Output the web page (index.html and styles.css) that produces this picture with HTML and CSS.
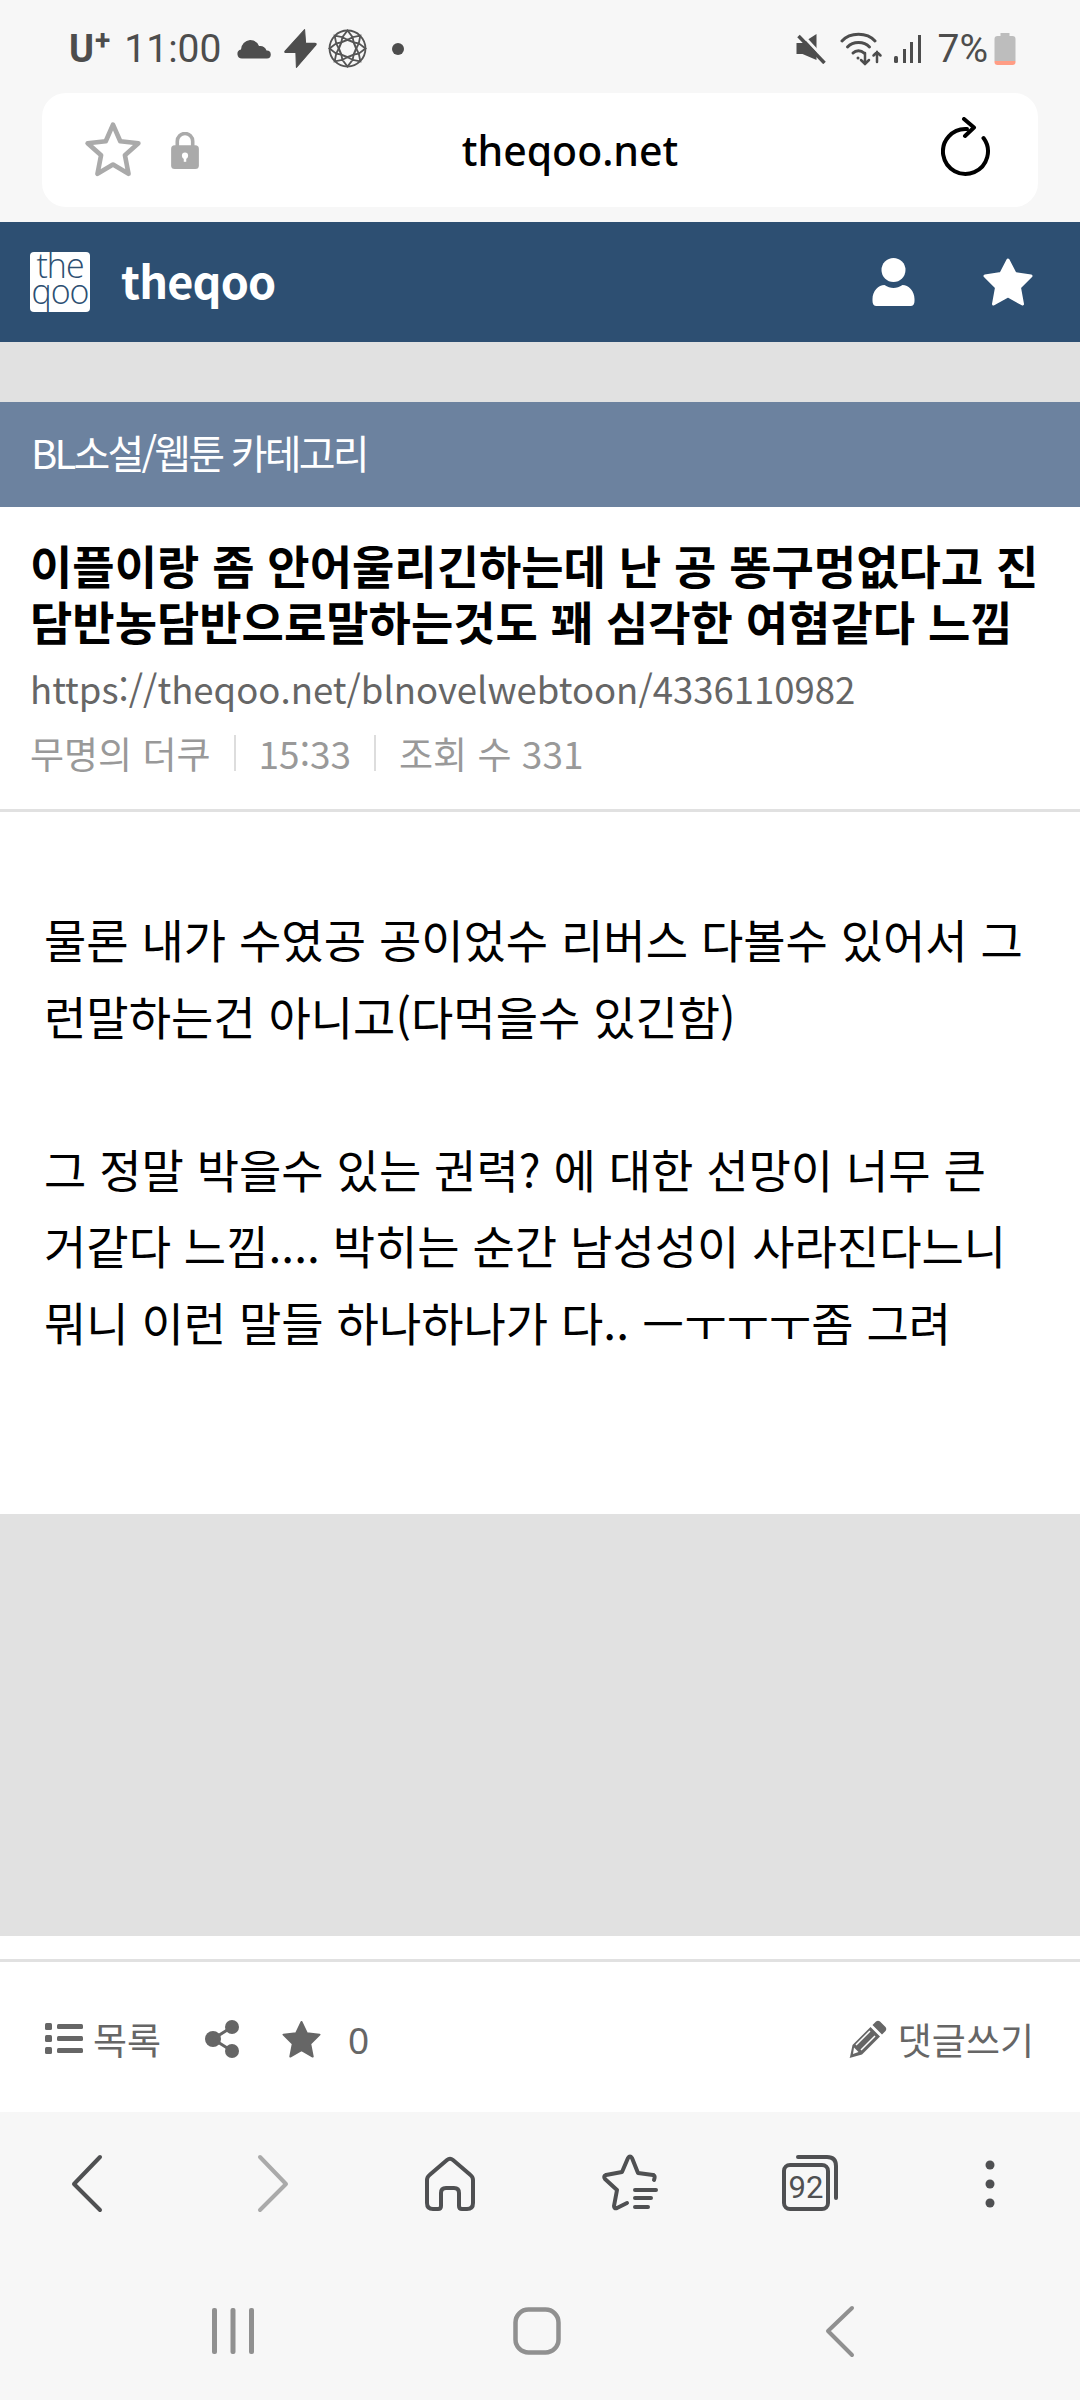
FILE: index.html
```html
<!DOCTYPE html>
<html lang="ko">
<head>
<meta charset="utf-8">
<title>theqoo</title>
<link rel="stylesheet" href="styles.css">
</head>
<body>
<div class="status">
  <div class="status-left">
    <span class="carrier">U<sup>+</sup></span>
    <span class="time">11:00</span>
    <svg class="i-cloud" viewBox="0 0 36 22"><path fill="#4d4d4d" d="M6 20.500a4.500 4.500 0 0 1-1-8.900A10 10 0 0 1 14 2a9.500 9.500 0 0 1 9 6 7 7 0 0 1 7.500 4.500 4 4 0 0 1 .5 8z"/></svg>
    <svg class="i-bolt" viewBox="0 0 32 38"><path fill="#4d4d4d" d="M20 .5 1 21.500q-1 1.500 1 1.500h9.500L12 37.500 31 15.500q1-1.500-1-1.500h-9z" stroke="#4d4d4d" stroke-linejoin="round"/></svg>
    <svg class="i-gem" viewBox="0 0 38 38" fill="none" stroke="#555" stroke-width="1.800"><circle cx="19" cy="19" r="17.500"/><path d="M19 10.500 25 13l2.500 6L25 25l-6 2.500L13 25l-2.500-6L13 13z" stroke-width="2"/><path d="M19 1.500 14 8l5 2.500L24 8zM19 36.500 14 30l5-2.500L24 30zM1.500 19 8 14l2.500 5L8 24zM36.500 19 30 14l-2.500 5L30 24zM6.500 6.500 14 8l-1 5-5 1zM31.500 6.500 24 8l1 5 5 1zM6.500 31.500 14 30l-1-5-5-1zM31.500 31.500 24 30l1-5 5-1z"/></svg>
    <span class="dot"></span>
  </div>
  <div class="status-right">
    <svg class="i-mute" viewBox="0 0 30 30"><path fill="#4d4d4d" d="M0 9h6L20 0v26L6 20H0z"/><path d="M5 0 30 27" stroke="#f7f7f7" stroke-width="3"/><path d="M2 2 28 29" stroke="#4d4d4d" stroke-width="3.500"/></svg>
    <svg class="i-wifi" viewBox="0 0 43 34" fill="none" stroke="#4d4d4d" stroke-width="3" stroke-linecap="round"><path d="M2 9C10 0 27 0 35 9"/><path d="M7.500 15C13 9 24 9 29.500 15"/><path d="M13 21c3-3 8-3 11 0"/><path d="M25 21v11m-4-4 4 4 4-4" stroke-width="2.500"/><path d="M37 30V20m-3.500 3.500L37 20l3.500 3.500" stroke-width="2.500"/><circle cx="18" cy="26" r="1.500" fill="#4d4d4d" stroke="none"/></svg>
    <svg class="i-signal" viewBox="0 0 27 30" fill="#4d4d4d"><rect x="0" y="22" width="4" height="7" rx="1.500"/><rect x="9" y="15" width="3" height="14"/><rect x="16" y="8" width="3" height="21"/><rect x="24" y="1" width="3" height="28"/></svg>
    <span class="pct">7%</span>
    <svg class="i-batt" viewBox="0 0 21 32"><path fill="#bdbdbd" d="M6 0h9v3h3a3 3 0 0 1 3 3v22H0V6a3 3 0 0 1 3-3h3z"/><path fill="#ff9d85" d="M0 28h21v1a3 3 0 0 1-3 3H3a3 3 0 0 1-3-3z"/></svg>
  </div>
</div>

<div class="urlwrap">
  <div class="urlbar">
    <svg class="i-fav" viewBox="0 0 56 56" fill="none" stroke="#aaa" stroke-width="4.500" stroke-linejoin="round"><path d="M28 3.500 35 19.500 52.500 21.500 39.500 33 43 51 28 42 13 51 16.500 33 3.500 21.500 21 19.500z"/></svg>
    <svg class="i-lock" viewBox="0 0 27 36"><path fill="none" stroke="#aaa" stroke-width="3.500" d="M6 16V9a7.500 7.500 0 0 1 15 0v7"/><rect x="0" y="13" width="27" height="23" rx="3.500" fill="#aaa"/><circle cx="13.500" cy="23" r="3" fill="#fff"/><rect x="12.300" y="23" width="2.400" height="6" fill="#fff"/></svg>
    <span class="domain">theqoo.net</span>
    <svg class="i-reload" viewBox="0 0 50 60" fill="none" stroke="#000" stroke-width="4" stroke-linecap="round" stroke-linejoin="round"><path d="M42.500 21A22.500 22.500 0 1 1 26 12"/><path d="M23 2 33 10.500 24 19"/></svg>
  </div>
</div>

<header class="site">
  <div class="logo">the<br>qoo</div>
  <span class="brand">theqoo</span>
  <svg class="i-user" viewBox="0 0 42 48" fill="#fff"><circle cx="21" cy="12" r="12"/><path d="M0 43v-2c0-8 6-14 12-14 3 2 6 3 9 3s6-1 9-3c6 0 12 6 12 14v2q0 5-4 5H4q-4 0-4-5z"/></svg>
  <svg class="i-hstar" viewBox="0 0 50 48" fill="#fff" stroke="#fff" stroke-width="3" stroke-linejoin="round"><path d="M25 2 32 15.500 48 18 36.500 29.500 39.500 46 25 38 10.500 46 13.500 29.500 2 18 18 15.500z"/></svg>
</header>

<div class="gap-top"></div>

<div class="cat">BL소설/웹툰 카테고리</div>

<section class="head">
  <h1 class="title">이플이랑 좀 안어울리긴하는데 난 공 똥구멍없다고 진<br>담반농담반으로말하는것도 꽤 심각한 여혐같다 느낌</h1>
  <div class="link">https://theqoo.net/blnovelwebtoon/4336110982</div>
  <div class="meta"><span>무명의 더쿠</span><i></i><span>15:33</span><i></i><span>조회 수 331</span></div>
</section>

<article class="body">
  <p>물론 내가 수였공 공이었수 리버스 다볼수 있어서 그<br>런말하는건 아니고(다먹을수 있긴함)</p>
  <p class="blank">&nbsp;</p>
  <p>그 정말 박을수 있는 권력? 에 대한 선망이 너무 큰<br>거같다 느낌.... 박히는 순간 남성성이 사라진다느니<br>뭐니 이런 말들 하나하나가 다.. ㅡㅜㅜㅜ좀 그려</p>
</article>

<div class="ad"></div>
<div class="strip"></div>

<div class="actions">
  <svg class="i-list" viewBox="0 0 38 32" fill="#666"><rect x="0" y="0" width="7" height="7" rx="1.500"/><rect x="0" y="12" width="7" height="7" rx="1.500"/><rect x="0" y="24" width="7" height="7" rx="1.500"/><rect x="12" y="1" width="26" height="5" rx="1.500"/><rect x="12" y="13" width="26" height="5" rx="1.500"/><rect x="12" y="25" width="26" height="5" rx="1.500"/></svg>
  <span class="a-label">목록</span>
  <svg class="i-share" viewBox="0 0 34 38" fill="#666"><circle cx="27" cy="7" r="7"/><circle cx="27" cy="31" r="7"/><circle cx="8" cy="19" r="8"/><path d="M8 19 27 7M8 19l19 12" stroke="#666" stroke-width="3"/></svg>
  <svg class="i-astar" viewBox="0 0 40 38" fill="#666" stroke="#666" stroke-width="2" stroke-linejoin="round"><path d="M20 1.500 25.500 13 38.500 14.500 29 24 31.500 37 20 30.500 8.500 37 11 24 1.500 14.500 14.500 13z"/></svg>
  <span class="a-count">0</span>
  <span class="a-fill"></span>
  <svg class="i-pen" viewBox="0 0 38 38"><path fill="#666" d="M27 1.500q2-1.500 4 0l5.500 5.500q1.500 2 0 4L33 14.500 23.500 5zM21.500 7 31 16.500 13 34.500 0.500 38 1 37 3.500 25z"/><path fill="#fff" d="M5 27.500 9.500 32 4 34z"/><path stroke="#fff" stroke-width="1.500" d="M21 11 7 25M26 16 12 30"/></svg>
  <span class="a-label">댓글쓰기</span>
</div>

<nav class="toolbar">
  <svg viewBox="0 0 60 60" fill="none" stroke="#4f5052" stroke-width="4" stroke-linecap="round" stroke-linejoin="round"><path d="M43 3 17 30 43 56"/></svg>
  <svg viewBox="0 0 60 60" fill="none" stroke="#aaa" stroke-width="4" stroke-linecap="round" stroke-linejoin="round"><path d="M17 3 43 30 17 56"/></svg>
  <svg viewBox="0 0 60 60" fill="none" stroke="#4f5052" stroke-width="4" stroke-linecap="round" stroke-linejoin="round"><path d="M7 26q0-3 2.500-5L27 6q3-2.500 6 0l17.500 15q2.500 2 2.500 5v23q0 6-6 6H42q-3 0-3-3V39q0-5-5-5h-8q-5 0-5 5v13q0 3-3 3H13q-6 0-6-6z"/></svg>
  <svg viewBox="0 0 60 60" fill="none" stroke="#4f5052" stroke-width="4" stroke-linecap="round" stroke-linejoin="round"><path d="M54 21 39 19 33 4q-2-3-4 0L23 18 7 21q-3 1-1 4l12 11-3 16q0 3 3 2l10-5"/><path d="M54.500 21q2 1 .5 5M36 36h21M36 44h16M36 53h13"/></svg>
  <svg viewBox="0 0 60 60" fill="none" stroke="#4f5052" stroke-linecap="round"><path stroke-width="4" d="M17 3h29q9 0 9 9v32"/><rect x="3" y="11" width="44" height="44" rx="6" stroke-width="4"/><text class="tabnum" x="25" y="44" text-anchor="middle">92</text></svg>
  <svg viewBox="0 0 60 60" fill="#4f5052"><circle cx="30" cy="11" r="4.500"/><circle cx="30" cy="30" r="4.500"/><circle cx="30" cy="49" r="4.500"/></svg>
</nav>

<nav class="sysnav">
  <svg class="n-rec" viewBox="0 0 60 60" fill="#909090"><rect x="9" y="7" width="5" height="46" rx="2"/><rect x="27.500" y="7" width="5" height="46" rx="2"/><rect x="46" y="7" width="5" height="46" rx="2"/></svg>
  <svg class="n-home" viewBox="0 0 60 60" fill="none" stroke="#909090" stroke-width="4.500"><rect x="2.500" y="6.500" width="43" height="43" rx="13" transform="translate(6 2)"/></svg>
  <svg class="n-back" viewBox="0 0 60 60" fill="none" stroke="#909090" stroke-width="4" stroke-linecap="round" stroke-linejoin="round"><path d="M42 7 18 30 42 54"/></svg>
</nav>
</body>
</html>
```

FILE: styles.css
```css
* { box-sizing: border-box; }
html, body { margin: 0; padding: 0; }
body {
  width: 1080px;
  height: 2400px;
  overflow: hidden;
  background: #fff;
  font-family: "Noto Sans CJK KR", "Noto Sans", sans-serif;
  color: #000;
}
svg { display: block; flex: none; }

.status {
  height: 93px;
  background: #f7f7f7;
  display: flex;
  justify-content: space-between;
  align-items: center;
  padding: 4px 64px 0 69px;
  color: #4d4d4d;
  font-family: Roboto, sans-serif;
}
.status-left, .status-right { display: flex; align-items: center; }
.carrier { font-weight: 700; font-size: 38px; line-height: 40px; margin-right: 14px; }
.carrier sup { font-size: 28px; line-height: 0; vertical-align: 12px; margin-left: 1px; }
.time { font-size: 39px; line-height: 40px; margin-right: 15px; }
.i-cloud { width: 36px; height: 22px; margin-right: 12px; }
.i-bolt { width: 33px; height: 39px; margin-right: 11px; }
.i-gem { width: 39px; height: 39px; margin-right: 25px; }
.dot { width: 12px; height: 12px; border-radius: 50%; background: #4d4d4d; }
.i-mute { width: 31px; height: 30px; margin-right: 13px; }
.i-wifi { width: 43px; height: 34px; margin-right: 11px; }
.i-signal { width: 27px; height: 30px; margin-right: 17px; }
.pct { font-size: 39px; line-height: 40px; margin-right: 6px; }
.i-batt { width: 22px; height: 32px; }

.urlwrap { height: 129px; background: #f7f7f7; padding: 0 42px 15px; }
.urlbar {
  height: 114px;
  background: #fff;
  border-radius: 24px;
  display: flex;
  align-items: center;
  padding: 0 47px 0 42px;
}
.i-fav { width: 58px; height: 58px; margin-right: 29px; }
.i-lock { width: 28px; height: 37px; }
.domain {
  flex: 1;
  text-align: center;
  font-family: "Noto Sans", sans-serif;
  font-weight: 500;
  font-size: 41px;
}
.i-reload { width: 50px; height: 60px; margin-bottom: 6px; }

.site {
  height: 120px;
  background: #2d4f72;
  display: flex;
  align-items: center;
  padding: 0 46px 0 30px;
  color: #fff;
}
.logo {
  width: 60px;
  height: 60px;
  background: #fff;
  border-radius: 4px;
  margin-right: 31px;
  color: #2d4f72;
  font-family: "Open Sans", sans-serif;
  font-weight: 300;
  font-size: 34px;
  line-height: 26px;
  letter-spacing: -1px;
  text-align: center;
}
.brand { flex: 1; font-size: 45px; font-weight: 700; line-height: 60px; padding-bottom: 4px; letter-spacing: -0.800px; }
.i-user { width: 43px; height: 48px; margin-right: 67px; }
.i-hstar { width: 52px; height: 48px; }

.gap-top { height: 60px; background: #e1e1e1; }
.cat {
  height: 105px;
  background: #6c829f;
  color: #fff;
  display: flex;
  align-items: center;
  padding: 0 0 6px 31px;
  font-size: 40px;
  letter-spacing: -2.800px;
}

.head {
  height: 305px;
  border-bottom: 3px solid #e1e1e1;
  padding: 29px 30px 0;
}
.title {
  margin: 0;
  font-size: 46px;
  font-weight: 700;
  line-height: 56px;
  white-space: nowrap;
}
.link {
  font-size: 36.500px;
  line-height: 50px;
  color: #666;
  margin-top: 16px;
  white-space: nowrap;
}
.meta {
  display: flex;
  align-items: center;
  margin-top: 14px;
  font-size: 37px;
  line-height: 50px;
  color: #999;
}
.meta i {
  width: 2px;
  height: 36px;
  background: #ddd;
  margin: 0 23px;
}

.body {
  height: 702px;
  padding: 88px 20px 0 44px;
  font-size: 46px;
  line-height: 76.500px;
  white-space: nowrap;
}
.body p { margin: 0; }

.ad { height: 422px; background: #e1e1e1; }
.strip { height: 26px; border-bottom: 3px solid #e1e1e1; }

.actions {
  height: 150px;
  display: flex;
  align-items: center;
  padding: 4px 46px 0 45px;
  color: #666;
  font-size: 37px;
}
.a-label { line-height: 40px; }
.i-list { width: 38px; height: 32px; margin-right: 10px; }
.i-share { width: 34px; height: 38px; margin: 0 43px 0 44px; }
.i-astar { width: 39px; height: 38px; margin-right: 27px; }
.a-count { font-family: "Noto Sans", sans-serif; }
.a-fill { flex: 1; }
.i-pen { width: 38px; height: 38px; margin-right: 11px; }

.toolbar {
  height: 174px;
  background: #f7f7f7;
  display: grid;
  grid-template-columns: 186px 177px 179px 182px 179px 60px;
  align-content: start;
  padding: 42px 0 0 57px;
}
.toolbar svg { width: 60px; height: 60px; }
.tabnum { font-family: Roboto, sans-serif; font-size: 31px; fill: #4f5052; stroke: none; }

.sysnav {
  height: 114px;
  background: #f7f7f7;
  display: flex;
  align-items: flex-start;
  padding: 15px 0 0 203px;
}
.sysnav svg { width: 60px; height: 60px; }
.n-home { margin-left: 244px; }
.n-back { margin-left: 243px; }
```
